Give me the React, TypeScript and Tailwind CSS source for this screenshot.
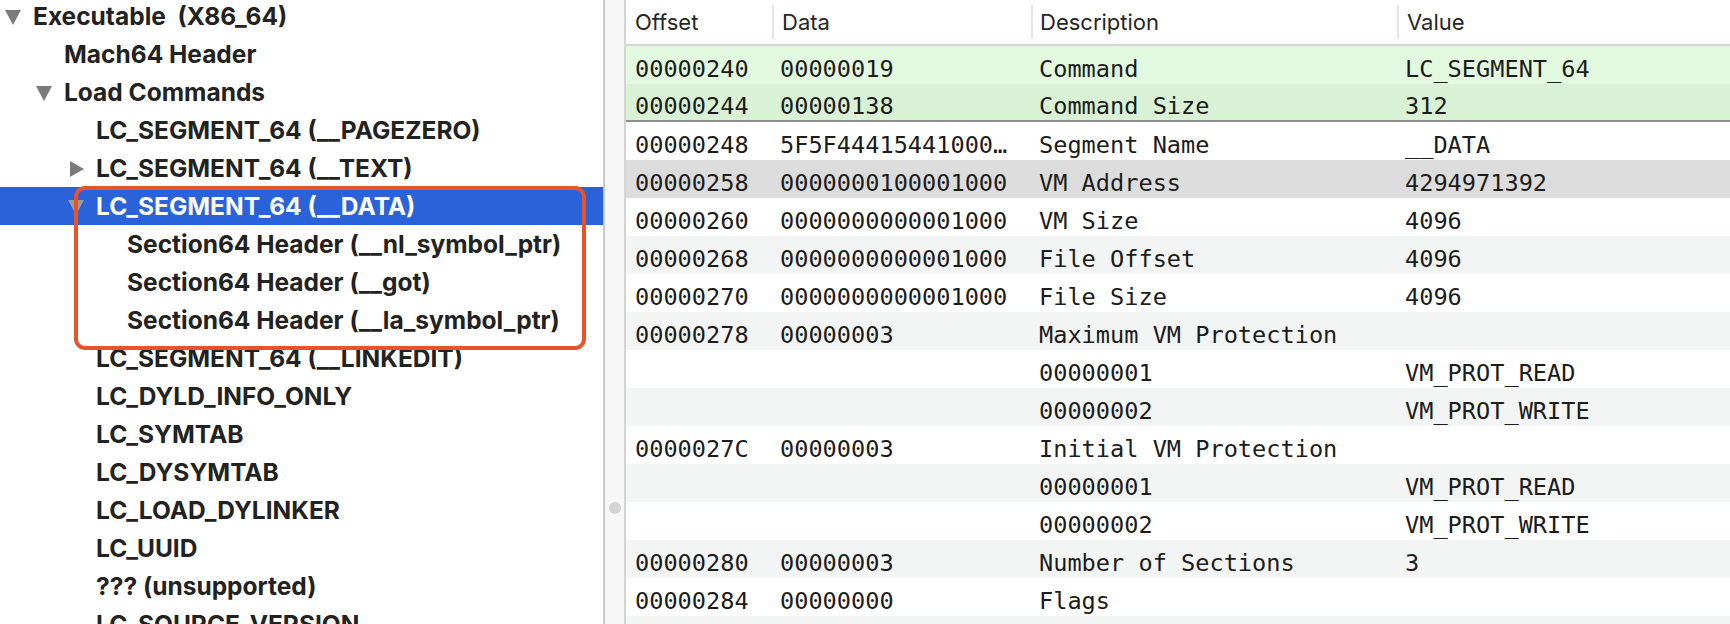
const tree: { label: string; level: number; arrow?: "down" | "right"; selected?: boolean }[] = [
  { label: "Executable  (X86_64)", level: 0, arrow: "down" },
  { label: "Mach64 Header", level: 1 },
  { label: "Load Commands", level: 1, arrow: "down" },
  { label: "LC_SEGMENT_64 (__PAGEZERO)", level: 2 },
  { label: "LC_SEGMENT_64 (__TEXT)", level: 2, arrow: "right" },
  { label: "LC_SEGMENT_64 (__DATA)", level: 2, arrow: "down", selected: true },
  { label: "Section64 Header (__nl_symbol_ptr)", level: 3 },
  { label: "Section64 Header (__got)", level: 3 },
  { label: "Section64 Header (__la_symbol_ptr)", level: 3 },
  { label: "LC_SEGMENT_64 (__LINKEDIT)", level: 2 },
  { label: "LC_DYLD_INFO_ONLY", level: 2 },
  { label: "LC_SYMTAB", level: 2 },
  { label: "LC_DYSYMTAB", level: 2 },
  { label: "LC_LOAD_DYLINKER", level: 2 },
  { label: "LC_UUID", level: 2 },
  { label: "??? (unsupported)", level: 2 },
  { label: "LC_SOURCE_VERSION", level: 2 },
];

const indent = ["pl-[33px]", "pl-[64px]", "pl-[96px]", "pl-[127px]"];

const rows: { off: string; data: string; desc: string; value: string; bg: string }[] = [
  { off: "00000240", data: "00000019", desc: "Command", value: "LC_SEGMENT_64", bg: "bg-[#e3f9df]" },
  { off: "00000244", data: "00000138", desc: "Command Size", value: "312", bg: "bg-[#d9f1d4] border-b-2 border-[#8e8e8e]" },
  { off: "00000248", data: "5F5F44415441000…", desc: "Segment Name", value: "__DATA", bg: "bg-white" },
  { off: "00000258", data: "0000000100001000", desc: "VM Address", value: "4294971392", bg: "bg-[#dcdcdc]" },
  { off: "00000260", data: "0000000000001000", desc: "VM Size", value: "4096", bg: "bg-white" },
  { off: "00000268", data: "0000000000001000", desc: "File Offset", value: "4096", bg: "bg-[#f3f4f4]" },
  { off: "00000270", data: "0000000000001000", desc: "File Size", value: "4096", bg: "bg-white" },
  { off: "00000278", data: "00000003", desc: "Maximum VM Protection", value: "", bg: "bg-[#f3f4f4]" },
  { off: "", data: "", desc: "00000001", value: "VM_PROT_READ", bg: "bg-white" },
  { off: "", data: "", desc: "00000002", value: "VM_PROT_WRITE", bg: "bg-[#f3f4f4]" },
  { off: "0000027C", data: "00000003", desc: "Initial VM Protection", value: "", bg: "bg-white" },
  { off: "", data: "", desc: "00000001", value: "VM_PROT_READ", bg: "bg-[#f3f4f4]" },
  { off: "", data: "", desc: "00000002", value: "VM_PROT_WRITE", bg: "bg-white" },
  { off: "00000280", data: "00000003", desc: "Number of Sections", value: "3", bg: "bg-[#f3f4f4]" },
  { off: "00000284", data: "00000000", desc: "Flags", value: "", bg: "bg-white" },
  { off: "", data: "", desc: "", value: "", bg: "bg-[#f3f4f4]" },
];

function Arrow({ dir, selected }: { dir: "down" | "right"; selected?: boolean }) {
  const fill = selected ? "#9a9a9a" : "#7b7b7b";
  return (
    <svg width="18" height="18" viewBox="0 0 18 18" className="absolute -ml-[29px] mt-[1px]">
      {dir === "down" ? <path d="M1 2 L17 2 L9 17 Z" fill={fill} /> : <path d="M3 1 L17 9 L3 17 Z" fill={fill} />}
    </svg>
  );
}

export default function App() {
  return (
    <div className="flex w-[1730px] h-[624px] overflow-hidden bg-white text-[#222]">
      {/* tree */}
      <div className="relative w-[603px] shrink-0 overflow-hidden font-['Inter',sans-serif] font-bold">
        <div className="-mt-[3px]">
          {tree.map((t, i) => (
            <div
              key={i}
              className={`h-[38px] flex items-center text-[24.5px] whitespace-pre ${indent[t.level]} ${
                t.selected ? "bg-[#2a62d9] text-white" : ""
              }`}
            >
              <span className="relative flex items-center">
                {t.arrow && <Arrow dir={t.arrow} selected={t.selected} />}
                {t.label}
              </span>
            </div>
          ))}
        </div>
        <div className="absolute left-[74px] top-[186px] w-[512px] h-[164px] border-[4px] border-[#e9532c] rounded-[11px]" />
      </div>

      {/* splitter */}
      <div className="relative w-[23px] shrink-0 border-l-2 border-r-2 border-l-[#c9c9c9] border-r-[#d4d4d4] bg-[#f7f7f7]">
        <div className="absolute left-[4px] top-[502px] w-[12px] h-[12px] rounded-full bg-[#d3d3d3]" />
      </div>

      {/* table */}
      <div className="flex-1 flex flex-col">
        <div className="h-[46px] shrink-0 flex items-center border-b-2 border-[#d6d6d6] font-['Inter',sans-serif] text-[22px] text-[#262626]">
          <div className="w-[146px] pl-[9px]">Offset</div>
          <div className="w-[2px] h-[34px] bg-[#e4e4e4]" />
          <div className="w-[257px] pl-[8px]">Data</div>
          <div className="w-[2px] h-[34px] bg-[#e4e4e4]" />
          <div className="w-[364px] pl-[7px]">Description</div>
          <div className="w-[2px] h-[34px] bg-[#e4e4e4]" />
          <div className="flex-1 pl-[8px]">Value</div>
        </div>
        <div className="font-['DejaVu_Sans_Mono',monospace] text-[23.6px] text-[#1c1c1c]">
          {rows.map((r, i) => (
            <div key={i} className={`h-[38px] flex items-center pt-[10px] whitespace-nowrap ${r.bg}`}>
              <div className="w-[146px] pl-[9px]">{r.off}</div>
              <div className="w-[259px] pl-[8px]">{r.data}</div>
              <div className="w-[366px] pl-[8px]">{r.desc}</div>
              <div className="flex-1 pl-[8px]">{r.value}</div>
            </div>
          ))}
        </div>
      </div>
    </div>
  );
}
